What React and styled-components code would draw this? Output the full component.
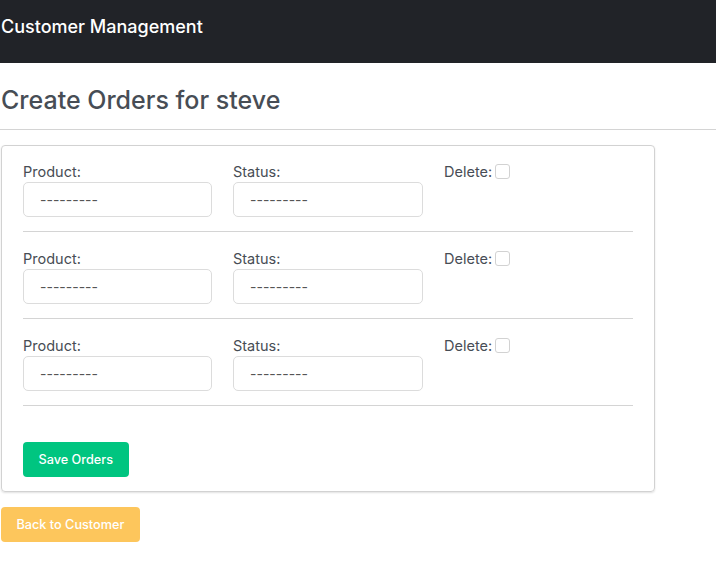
import React from "react";
import styled, { createGlobalStyle } from "styled-components";

const GlobalStyle = createGlobalStyle`
  body {
    margin: 0;
    font-family: Inter, "Noto Sans", sans-serif;
    background: #fff;
    color: #474d55;
  }
  * { box-sizing: border-box; }
`;

const NavBar = styled.nav`
  background: #212328;
  height: 63px;
  display: flex;
  align-items: center;
  padding: 0 0 10px 1px;
`;

const Brand = styled.span`
  color: #fff;
  font-size: 18px;
  font-weight: 500;
`;

const Page = styled.main`
  padding: 0 61px 0 1px;
`;

const Title = styled.h1`
  font-size: 25px;
  line-height: 30px;
  font-weight: 500;
  margin: 22px 0 14px;
  color: #474d55;
`;

const Rule = styled.hr`
  border: 0;
  border-top: 1px solid #d4d4d4;
  margin: 0 -61px 15px -1px;
`;

const Card = styled.form`
  border: 1px solid #d2d2d2;
  border-radius: 4px;
  box-shadow: 0 1px 2px rgba(0, 0, 0, 0.12);
  padding: 15px 21px 14px;
`;

const Row = styled.div`
  display: grid;
  grid-template-columns: 189px 190px 189px;
  column-gap: 21px;
  padding-bottom: 14px;
  border-bottom: 1px solid #d4d4d4;
  margin-bottom: 16px;
  &:last-of-type {
    margin-bottom: 36px;
  }
`;

const Field = styled.div`
  display: flex;
  flex-direction: ${(p) => (p.$inline ? "row" : "column")};
  align-items: ${(p) => (p.$inline ? "flex-start" : "stretch")};
  gap: ${(p) => (p.$inline ? "3px" : "0")};
`;

const Label = styled.label`
  font-size: 14.5px;
  line-height: 21px;
  color: #474d55;
`;

const Select = styled.div`
  height: 35px;
  border: 1px solid #dcdcdc;
  border-radius: 5px;
  padding: 0 16px;
  display: flex;
  align-items: center;
  font-size: 14px;
  color: #555;
`;

const Check = styled.span`
  width: 15px;
  height: 15px;
  margin-top: 3px;
  border: 1px solid #d2d2d2;
  border-radius: 3px;
  background: #fff;
`;

const Button = styled.button`
  border: 0;
  border-radius: 4px;
  height: 35px;
  padding: 0 ${(p) => p.$pad || 16}px;
  font-family: Inter, "Noto Sans", sans-serif;
  font-size: 12.7px;
  font-weight: 500;
  color: #fff;
  background: ${(p) => p.$bg};
`;

const Footer = styled.div`
  margin-top: 15px;
`;

const orders = [1, 2, 3];

export default function App() {
  return (
    <>
      <GlobalStyle />
      <NavBar>
        <Brand>Customer Management</Brand>
      </NavBar>
      <Page>
        <Title>Create Orders for steve</Title>
        <Rule />
        <Card>
          {orders.map((n) => (
            <Row key={n}>
              <Field>
                <Label>Product:</Label>
                <Select>---------</Select>
              </Field>
              <Field>
                <Label>Status:</Label>
                <Select>---------</Select>
              </Field>
              <Field $inline>
                <Label>Delete:</Label>
                <Check />
              </Field>
            </Row>
          ))}
          <Button type="button" $bg="#00c580" $pad={15.5}>
            Save Orders
          </Button>
        </Card>
        <Footer>
          <Button type="button" $bg="#fdc65c" $pad={15.5}>
            Back to Customer
          </Button>
        </Footer>
      </Page>
    </>
  );
}
